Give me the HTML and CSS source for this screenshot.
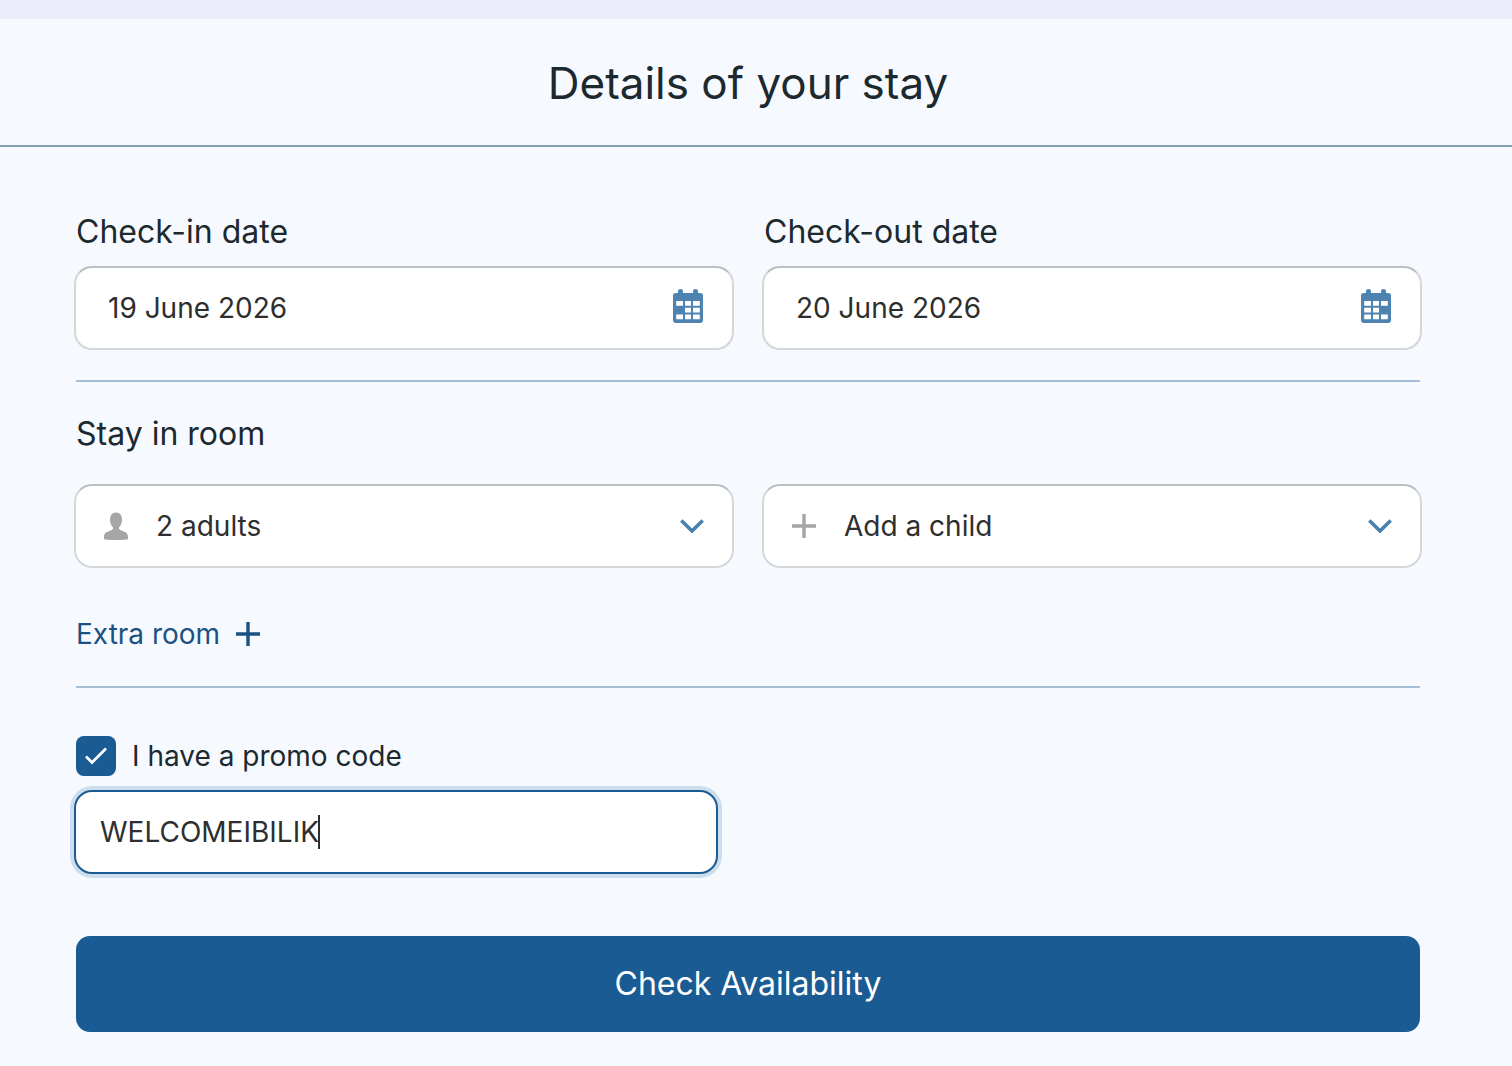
FILE: index.html
```html
<!DOCTYPE html>
<html lang="en">
<head>
<meta charset="utf-8">
<meta name="viewport" content="width=device-width, initial-scale=1">
<title>Details of your stay</title>
<link rel="stylesheet" href="styles.css">
</head>
<body>
<header class="header">
  <h1 class="title">Details of your stay</h1>
</header>
<main>
<form class="booking">
  <section class="dates">
    <div class="column">
      <label class="label" for="checkin">Check-in date</label>
      <div class="field">
        <input class="control date" id="checkin" type="text" value="19 June 2026" readonly>
        <svg class="calendar" viewBox="0 0 30 34" aria-hidden="true">
          <path fill="#4d82b1" d="M3 4h2V2q0-2 2.500-2T10 2v2h10V2q0-2 2.500-2T25 2v2h2q3 0 3 3v24q0 3-3 3H3q-3 0-3-3V7q0-3 3-3Z"/>
          <path fill="#fff" d="M3.200 12h6.800v4.700H3.200zM12 12h6v4.700h-6zM20 12h6.800v4.700H20zM12 18.800h6v4.700h-6zM20 18.800h6.800v4.700H20zM3.200 25.600h6.800v4.700H3.200zM12 25.600h6v4.700h-6zM20 25.600h6.800v4.700H20z"/>
        </svg>
      </div>
    </div>
    <div class="column">
      <label class="label" for="checkout">Check-out date</label>
      <div class="field">
        <input class="control date" id="checkout" type="text" value="20 June 2026" readonly>
        <svg class="calendar" viewBox="0 0 30 34" aria-hidden="true">
          <path fill="#4d82b1" d="M3 4h2V2q0-2 2.500-2T10 2v2h10V2q0-2 2.500-2T25 2v2h2q3 0 3 3v24q0 3-3 3H3q-3 0-3-3V7q0-3 3-3Z"/>
          <path fill="#fff" d="M3.200 12h6.800v4.700H3.200zM12 12h6v4.700h-6zM20 12h6.800v4.700H20zM3.200 18.800h6.800v4.700H3.200zM12 18.800h6v4.700h-6zM3.200 25.600h6.800v4.700H3.200zM12 25.600h6v4.700h-6zM20 25.600h6.800v4.700H20z"/>
        </svg>
      </div>
    </div>
  </section>

  <section class="room">
    <h2 class="label">Stay in room</h2>
    <div class="guests">
      <div class="field">
        <svg class="icon" viewBox="0 0 24 28" aria-hidden="true"><path fill="#a6a6a6" d="M12 .5c4 0 6 3 6 7 0 3-1 6-3 8v1.500c2 2.500 9 2 9 7.500v2.500q-1 1-12 1t-12-1V24.500c0-5.500 7-5 9-7.500v-1.500c-2-2-3-5-3-8 0-4 2-7 6-7Z"/></svg>
        <select class="control" aria-label="Adults"><option>1 adult</option><option selected>2 adults</option><option>3 adults</option></select>
        <svg class="chevron" viewBox="0 0 24 14" aria-hidden="true"><path fill="none" stroke="#4a80b0" stroke-width="3.600" d="m1.300 1.500 10.700 10.500L22.700 1.500"/></svg>
      </div>
      <div class="field">
        <svg class="icon" viewBox="0 0 24 24" aria-hidden="true"><path fill="none" stroke="#a6a6a6" stroke-width="3.500" d="M12 0v24M0 12h24"/></svg>
        <select class="control" aria-label="Children"><option>Add a child</option><option>1 child</option></select>
        <svg class="chevron" viewBox="0 0 24 14" aria-hidden="true"><path fill="none" stroke="#4a80b0" stroke-width="3.600" d="m1.300 1.500 10.700 10.500L22.700 1.500"/></svg>
      </div>
    </div>
    <button class="extra" type="button">Extra room
      <svg class="plus" viewBox="0 0 24 24" aria-hidden="true"><path fill="none" stroke="#1b5283" stroke-width="3.400" d="M12 0v24M0 12h24"/></svg>
    </button>
  </section>

  <section class="promo">
    <label class="check"><input class="checkbox" type="checkbox" checked>I have a promo code</label>
    <div class="code-field">
      <input class="code" type="text" value="WELCOMEIBILIK" aria-label="Promo code">
      <span class="caret"></span>
    </div>
  </section>

  <button class="submit" type="submit">Check Availability</button>
</form>
</main>
</body>
</html>
```
FILE: styles.css
```css
* { box-sizing: border-box; }

body {
  margin: 0;
  background: #f6faff;
  color: #1c292f;
  font-family: Inter, "Liberation Sans", sans-serif;
  font-size: 28px;
  line-height: 40px;
}

input, select, button {
  margin: 0;
  font: inherit;
}

.header {
  padding: 36px 16px 34px 0;
  border-top: 19px solid #ebeefa;
  border-bottom: 2px solid #859fb4;
}

.title {
  margin: 0;
  font-size: 44px;
  font-weight: 400;
  line-height: 56px;
  text-align: center;
}

.booking { padding: 65px 92px 34px 76px; }

.dates, .guests {
  display: grid;
  grid-template-columns: 1fr 1fr;
  gap: 28px;
}

.dates { padding-bottom: 30px; }

.dates, .guests, .code-field { margin: 0 -2px; }

.label {
  display: block;
  margin: 0;
  font-size: 32px;
  font-weight: 400;
  line-height: 40px;
}

.dates .label { padding-left: 2px; margin-bottom: 14px; }

.field {
  display: flex;
  align-items: center;
  height: 84px;
  padding: 0 28px;
  border: 2px solid #d3d7da;
  border-top-color: #bbbfc2;
  border-radius: 18px;
  background: #fff;
}

.control {
  flex: 1;
  min-width: 0;
  height: 80px;
  padding: 0;
  border: 0;
  outline: 0;
  appearance: none;
  background: transparent;
  color: #2e2e2e;
}

.date { padding-left: 4px; }

.calendar {
  width: 30px;
  height: 34px;
  margin: 0 1px 4px 0;
}

.icon {
  width: 24px;
  height: 28px;
  margin-right: 28px;
}

.chevron { width: 24px; height: 14px; }

.room {
  padding: 32px 0;
  border: solid #a6bed5;
  border-width: 2px 0;
}

.guests { margin-top: 30px; }

.extra {
  display: flex;
  align-items: center;
  gap: 16px;
  margin-top: 46px;
  padding: 0;
  border: 0;
  background: none;
  color: #1b5283;
}

.plus { width: 24px; height: 24px; }

.promo { padding: 48px 0 62px; }

.check {
  display: flex;
  align-items: center;
  gap: 16px;
  margin-bottom: 14px;
}

.checkbox {
  width: 40px;
  height: 40px;
  appearance: none;
  border-radius: 8px;
  background: #1b5b93;
}

.checkbox:checked {
  background-image: url("data:image/svg+xml,%3Csvg xmlns='http://www.w3.org/2000/svg' viewBox='0 0 40 40'%3E%3Cpath fill='none' stroke='white' stroke-width='2.700' d='m10 20.500 6 6L30 12.500'/%3E%3C/svg%3E");
}

.code-field {
  position: relative;
  width: calc(50% - 28px);
}

.code {
  display: block;
  width: 100%;
  height: 84px;
  padding: 0 24px;
  border: 2px solid #1b5b93;
  border-radius: 18px;
  outline: 0;
  box-shadow: 0 0 0 4px #cddded;
  background: #fff;
  color: #2e2e2e;
}

.caret {
  position: absolute;
  top: 25px;
  left: 244px;
  width: 2px;
  height: 34px;
  background: #2e2e2e;
}

.submit {
  display: block;
  width: 100%;
  height: 96px;
  border: 0;
  border-radius: 14px;
  background: #1b5b93;
  color: #fff;
  font-size: 32px;
}
```
